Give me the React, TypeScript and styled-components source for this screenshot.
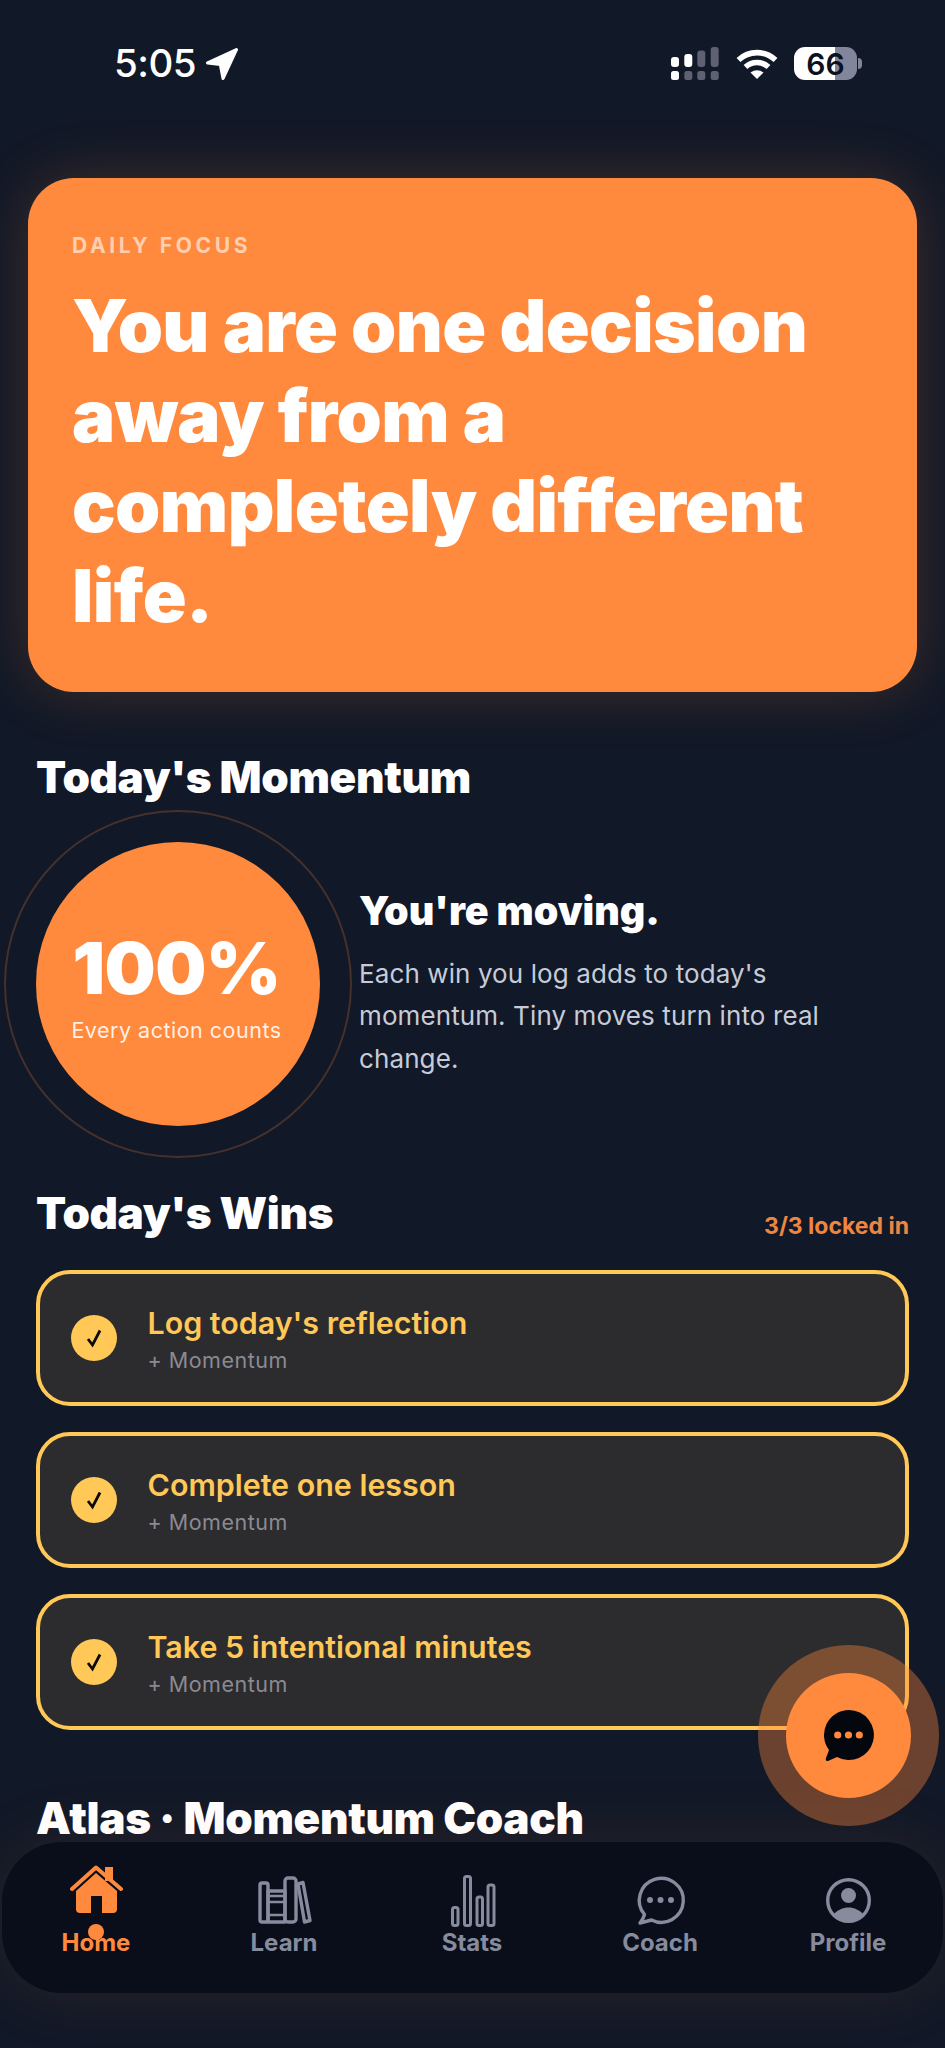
import * as React from "react";
import styled, { createGlobalStyle } from "styled-components";

const orange = "#ff8a3d";
const gold = "#ffc857";
const grey = "#868b9e";

const GlobalStyle = createGlobalStyle`
  html, body {
    margin: 0;
    padding: 0;
    background: #111827;
  }
  * {
    box-sizing: border-box;
  }
`;

const Screen = styled.div`
  position: relative;
  width: 945px;
  height: 2048px;
  overflow: hidden;
  background: #111827;
  font-family: Inter, "Noto Sans", sans-serif;
  color: #fff;
`;

const StatusBar = styled.div`
  display: flex;
  align-items: center;
  justify-content: space-between;
  height: 33px;
  margin-top: 47px;
  padding: 0 88px 0 114px;
`;

const StatusLeft = styled.div`
  display: flex;
  align-items: center;
  gap: 10px;
`;

const Time = styled.span`
  font-size: 38.5px;
  font-weight: 500;
  line-height: 33px;
  letter-spacing: -0.5px;
`;

const StatusRight = styled.div`
  display: flex;
  align-items: center;
  gap: 16.5px;
`;

const Battery = styled.div`
  position: relative;
  display: flex;
  align-items: center;
  justify-content: center;
  width: 63px;
  height: 33px;
  border-radius: 11px;
  background: linear-gradient(90deg, #fff 65%, #82869a 65%);
  color: #0c111d;
  font-size: 30px;
  font-weight: 600;

  &::after {
    content: "";
    position: absolute;
    right: -5px;
    top: 11px;
    width: 4px;
    height: 11px;
    border-radius: 0 4px 4px 0;
    background: #82869a;
  }
`;

const Hero = styled.section`
  margin: 98px 28px 0;
  height: 514px;
  padding: 56px 44px 0;
  border-radius: 46px;
  background: ${orange};
  box-shadow: 0 0 60px rgba(255, 138, 61, 0.2);
`;

const HeroLabel = styled.div`
  font-size: 21px;
  line-height: 24px;
  font-weight: 700;
  letter-spacing: 3.6px;
  color: rgba(255, 255, 255, 0.6);
`;

const HeroText = styled.h1`
  margin: 23px 0 0;
  font-size: 72.5px;
  line-height: 90px;
  font-weight: 900;
  letter-spacing: -0.6px;
  color: #fff;
`;

const Section = styled.section`
  padding: 0 36px;
`;

const SectionTitle = styled.h2`
  margin: 0;
  font-size: 44px;
  line-height: 54px;
  font-weight: 900;
  letter-spacing: -0.35px;
  color: #fff;
`;

const MomentumSection = styled(Section)`
  margin-top: 58px;
`;

const MomentumRow = styled.div`
  display: flex;
  align-items: center;
  gap: 39px;
  margin-top: 38px;
`;

const Ring = styled.div`
  position: relative;
  flex: none;
  display: flex;
  flex-direction: column;
  align-items: center;
  width: 284px;
  height: 284px;
  padding: 88px 3px 0 0;
  border-radius: 50%;
  background: ${orange};

  &::before {
    content: "";
    position: absolute;
    inset: -32px;
    border: 2px solid rgba(255, 138, 61, 0.22);
    border-radius: 50%;
  }
`;

const Percent = styled.div`
  font-size: 72px;
  line-height: 76px;
  font-weight: 900;
  letter-spacing: -0.5px;
`;

const RingCaption = styled.div`
  margin-top: 10px;
  font-size: 21.5px;
  line-height: 28px;
  color: rgba(255, 255, 255, 0.88);
  letter-spacing: 0.5px;
`;

const MomentumCopy = styled.div`
  flex: 1;
`;

const CopyTitle = styled.h3`
  margin: 0;
  font-size: 39.4px;
  line-height: 46px;
  font-weight: 900;
`;

const CopyBody = styled.p`
  margin: 19px 0 0;
  font-size: 26px;
  line-height: 42.5px;
  letter-spacing: 0.1px;
  color: #c6cbd8;
`;

const WinsSection = styled(Section)`
  margin-top: 60px;
`;

const WinsHeader = styled.div`
  display: flex;
  align-items: flex-end;
  justify-content: space-between;
`;

const LockedIn = styled.span`
  font-size: 23px;
  line-height: 30px;
  font-weight: 700;
  color: #ee8540;
  margin-bottom: -1px;
`;

const WinList = styled.div`
  display: flex;
  flex-direction: column;
  gap: 26px;
  margin-top: 30px;
`;

const WinCard = styled.div`
  display: flex;
  align-items: center;
  gap: 31px;
  height: 136px;
  padding: 0 30.5px;
  border: 4px solid ${gold};
  border-radius: 34px;
  background: #2c2c2e;
`;

const CheckCircle = styled.div`
  flex: none;
  display: flex;
  align-items: center;
  justify-content: center;
  width: 46px;
  height: 46px;
  border-radius: 50%;
  background: ${gold};
`;

const WinText = styled.div`
  padding-top: 2px;
`;

const WinTitle = styled.div`
  font-size: 30.4px;
  line-height: 38px;
  font-weight: 600;
  color: ${gold};
`;

const WinMeta = styled.div`
  margin-top: 4px;
  font-size: 21.5px;
  line-height: 28px;
  letter-spacing: 0.5px;
  color: #8a8a93;
`;

const AtlasSection = styled(Section)`
  margin-top: 61px;
`;

const Fab = styled.div`
  position: absolute;
  left: 786px;
  top: 1673px;
  display: flex;
  align-items: center;
  justify-content: center;
  width: 125px;
  height: 125px;
  border-radius: 50%;
  background: ${orange};
  box-shadow: 0 0 0 28px rgba(255, 138, 61, 0.38);
`;

const TabBar = styled.nav`
  position: absolute;
  left: 2px;
  top: 1842px;
  display: grid;
  grid-template-columns: repeat(5, 188px);
  width: 941px;
  height: 151px;
  padding-top: 23px;
  border-radius: 60px;
  background: #0a0e1a;
  box-shadow: 0 0 70px rgba(255, 138, 61, 0.1);
`;

const Tab = styled.div<{ $active?: boolean }>`
  position: relative;
  display: flex;
  flex-direction: column;
  align-items: center;
  color: ${(p) => (p.$active ? orange : grey)};
`;

const TabLabel = styled.span`
  margin-top: 0;
  font-size: 24px;
  line-height: 28px;
  font-weight: 700;
`;

const ActiveDot = styled.span`
  position: absolute;
  top: 59px;
  left: 86px;
  width: 16px;
  height: 16px;
  border-radius: 50%;
  background: ${orange};
`;

const LocationArrow = () => (
  <svg width="32" height="32" viewBox="0 0 30 30">
    <path
      d="M28.5 1.5 L1.5 14 L13.5 15.5 L16 28.5 Z"
      fill="#fff"
      stroke="#fff"
      strokeWidth="3"
      strokeLinejoin="round"
    />
  </svg>
);

const Signal = () => {
  const bars = [
    { x: 0, y: 10, fill: "#fff" },
    { x: 13.3, y: 7, fill: "#fff" },
    { x: 26.3, y: 3.5, fill: "#5d6172" },
    { x: 39.7, y: 0, fill: "#5d6172" },
  ];
  return (
    <svg width="48" height="33" viewBox="0 0 48 33">
      {bars.map((b, i) => (
        <React.Fragment key={b.x}>
          <rect x={b.x} y={b.y} width="8" height={20 - b.y} rx="3" fill={b.fill} />
          <rect x={b.x} y="24" width="8" height="9" rx="2.5" fill={i === 0 ? "#fff" : "#5d6172"} />
        </React.Fragment>
      ))}
    </svg>
  );
};

const Wifi = () => (
  <svg width="42" height="30" viewBox="0 0 42 30">
    <path d="M2.5 11 A27 27 0 0 1 39.5 11" fill="none" stroke="#fff" strokeWidth="5.6" />
    <path d="M9.5 18 A17 17 0 0 1 32.5 18" fill="none" stroke="#fff" strokeWidth="5.6" />
    <path d="M21 30 L14.5 23.5 Q21 19 27.5 23.5 Z" fill="#fff" />
  </svg>
);

const Check = () => (
  <svg width="24" height="24" viewBox="0 0 24 24">
    <path d="M6 13 L10.5 19 L18 4.5" fill="none" stroke="#0a0a0a" strokeWidth="2.8" />
  </svg>
);

const ChatFilled = () => (
  <svg width="52" height="52" viewBox="0 0 52 52">
    <path d="M26 0 A25 25 0 1 1 14 47 L5 51 Q2 51.5 3 48 L6 40 A25 25 0 0 1 26 0 Z" fill="#05070f" />
    <circle cx="14.7" cy="25" r="3.6" fill={orange} />
    <circle cx="25.5" cy="25" r="3.6" fill={orange} />
    <circle cx="36.3" cy="25" r="3.6" fill={orange} />
  </svg>
);

const HomeIcon = () => (
  <svg width="60" height="64" viewBox="0 0 60 64">
    <rect x="39" y="2" width="8" height="14" fill={orange} />
    <path d="M6 24 L30 2.5 L55 24" fill="none" stroke={orange} strokeWidth="4" strokeLinecap="round" strokeLinejoin="round" />
    <path
      d="M10 26 L30 8 L51 26 V44 a4 4 0 0 1 -4 4 H36 V31 H25 V48 H14 a4 4 0 0 1 -4 -4 Z"
      fill={orange}
    />
  </svg>
);

const LearnIcon = () => (
  <svg width="60" height="64" viewBox="0 0 60 64" fill="none" stroke={grey} strokeWidth="3.4" strokeLinejoin="round">
    <rect x="6" y="18" width="8" height="39" rx="2" />
    <rect x="14" y="26" width="17" height="31" />
    <path d="M14 31 H31 M14 37 H31 M14 50 H31" strokeWidth="2.6" />
    <rect x="31" y="13" width="11" height="44" rx="3" />
    <path d="M44 19 L49 17.5 L56 55.5 L50.5 57 Z" />
  </svg>
);

const StatsIcon = () => (
  <svg width="60" height="64" viewBox="0 0 60 64" fill="none" stroke={grey} strokeWidth="3">
    <rect x="10.5" y="42.5" width="5.5" height="18" rx="2" />
    <rect x="22.5" y="11.5" width="6" height="49" rx="2" />
    <rect x="35" y="32" width="5.5" height="28.5" rx="2" />
    <rect x="46" y="20" width="6" height="40.5" rx="2" />
  </svg>
);

const CoachIcon = () => (
  <svg width="60" height="64" viewBox="0 0 60 64">
    <path
      d="M21.5 55 L10 58 Q13.5 53.5 14.5 49.5 A22 22 0 1 1 21.5 55 Z"
      fill="none"
      stroke={grey}
      strokeWidth="3.4"
      strokeLinejoin="round"
    />
    <circle cx="20" cy="35" r="3" fill={grey} />
    <circle cx="30.5" cy="35" r="3" fill={grey} />
    <circle cx="41" cy="35" r="3" fill={grey} />
  </svg>
);

const ProfileIcon = () => (
  <svg width="60" height="64" viewBox="0 0 60 64">
    <circle cx="30.5" cy="35.5" r="20.8" fill="none" stroke={grey} strokeWidth="3.4" />
    <circle cx="30.5" cy="30.5" r="7.5" fill={grey} />
    <path d="M15 50 C19 45 25 42.5 30.5 42.5 C36 42.5 42 45 46 50 A21 21 0 0 1 15 50 Z" fill={grey} />
  </svg>
);

const wins = ["Log today's reflection", "Complete one lesson", "Take 5 intentional minutes"];

const tabs = [
  { label: "Home", icon: <HomeIcon />, active: true },
  { label: "Learn", icon: <LearnIcon /> },
  { label: "Stats", icon: <StatsIcon /> },
  { label: "Coach", icon: <CoachIcon /> },
  { label: "Profile", icon: <ProfileIcon /> },
];

const App = () => {
  return (
    <Screen>
      <GlobalStyle />
      <StatusBar>
        <StatusLeft>
          <Time>5:05</Time>
          <LocationArrow />
        </StatusLeft>
        <StatusRight>
          <Signal />
          <Wifi />
          <Battery>66</Battery>
        </StatusRight>
      </StatusBar>

      <Hero>
        <HeroLabel>DAILY FOCUS</HeroLabel>
        <HeroText>
          You are one decision away from a completely different life.
        </HeroText>
      </Hero>

      <MomentumSection>
        <SectionTitle>Today's Momentum</SectionTitle>
        <MomentumRow>
          <Ring>
            <Percent>100%</Percent>
            <RingCaption>Every action counts</RingCaption>
          </Ring>
          <MomentumCopy>
            <CopyTitle>You're moving.</CopyTitle>
            <CopyBody>
              Each win you log adds to today's momentum. Tiny moves turn into real change.
            </CopyBody>
          </MomentumCopy>
        </MomentumRow>
      </MomentumSection>

      <WinsSection>
        <WinsHeader>
          <SectionTitle>Today's Wins</SectionTitle>
          <LockedIn>3/3 locked in</LockedIn>
        </WinsHeader>
        <WinList>
          {wins.map((w) => (
            <WinCard key={w}>
              <CheckCircle>
                <Check />
              </CheckCircle>
              <WinText>
                <WinTitle>{w}</WinTitle>
                <WinMeta>+ Momentum</WinMeta>
              </WinText>
            </WinCard>
          ))}
        </WinList>
      </WinsSection>

      <AtlasSection>
        <SectionTitle>Atlas · Momentum Coach</SectionTitle>
      </AtlasSection>

      <Fab>
        <ChatFilled />
      </Fab>

      <TabBar>
        {tabs.map((t) => (
          <Tab key={t.label} $active={t.active}>
            {t.icon}
            {t.active && <ActiveDot />}
            <TabLabel>{t.label}</TabLabel>
          </Tab>
        ))}
      </TabBar>
    </Screen>
  );
};

export default App;
